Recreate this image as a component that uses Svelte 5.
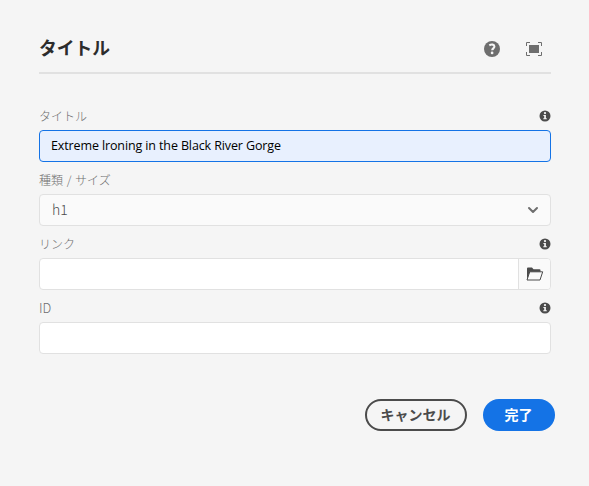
<script>
  let title = $state('Extreme lroning in the Black River Gorge');
  let link = $state('');
  let id = $state('');
</script>

{#snippet info()}
  <svg class="info" width="12" height="12" viewBox="0 0 12 12" aria-hidden="true">
    <circle cx="6" cy="6" r="5.5" fill="#4b4b4b" />
    <circle cx="6" cy="3.1" r="1.15" fill="#f5f5f5" />
    <path d="M4.4 5h2.5v3.3h.9v1H4.3v-1h.9V6h-.8z" fill="#f5f5f5" />
  </svg>
{/snippet}

<main class="dialog">
  <header>
    <h1>タイトル</h1>
    <div class="actions">
      <button class="icon" aria-label="Help">
        <svg width="16" height="16" viewBox="0 0 16 16">
          <circle cx="8" cy="8" r="8" fill="#6e6e6e" />
          <path d="M5.3 4.4C7.5 3 10.4 3.4 10.4 5.6c0 1.7-2.2 1.8-2.2 3.7" fill="none" stroke="#f5f5f5" stroke-width="2.1" />
          <circle cx="8.1" cy="11.9" r="1.35" fill="#f5f5f5" />
        </svg>
      </button>
      <button class="icon" aria-label="Fullscreen">
        <svg width="16" height="14" viewBox="0 0 16 14">
          <path d="M.5 4V.5H4M12 .5h3.5V4M15.5 10v3.5H12M4 13.5H.5V10" fill="none" stroke="#6e6e6e" />
          <rect x="3" y="3" width="10" height="8" fill="#6e6e6e" />
        </svg>
      </button>
    </div>
  </header>

  <form>
    <div class="field">
      <div class="label"><span>タイトル</span>{@render info()}</div>
      <input class="box active" bind:value={title} aria-label="タイトル" />
    </div>
    <div class="field">
      <div class="label"><span class="kind">種類 / サイズ</span></div>
      <button type="button" class="box select">
        <span>h1</span>
        <svg width="12" height="8" viewBox="0 0 12 8">
          <path d="M2 2l4 4 4-4" fill="none" stroke="#6e6e6e" stroke-width="2" stroke-linecap="round" stroke-linejoin="round" />
        </svg>
      </button>
    </div>
    <div class="field">
      <div class="label"><span>リンク</span>{@render info()}</div>
      <div class="box picker">
        <input bind:value={link} aria-label="リンク" />
        <button type="button" aria-label="Open">
          <svg width="18" height="14" viewBox="0 0 18 14">
            <path d="M1 13V1.5Q1 .5 2 .5h4l1.5 1.7h6q1 0 1 1V5" fill="#4b4b4b" />
            <path d="M1 13L3.7 4.8h13L14 13z" fill="#fafafa" stroke="#4b4b4b" stroke-linejoin="round" />
          </svg>
        </button>
      </div>
    </div>
    <div class="field">
      <div class="label"><span class="latin">ID</span>{@render info()}</div>
      <input class="box" bind:value={id} aria-label="ID" />
    </div>
  </form>

  <footer>
    <button class="cancel"><span>キャンセル</span></button>
    <button class="done"><span>完了</span></button>
  </footer>
</main>

<style>
  :global(body) { background: #f5f5f5; }
  .dialog {
    box-sizing: border-box;
    width: 589px;
    height: 486px;
    padding: 24px 38px 0 39px;
    background: #f5f5f5;
    font-family: 'Noto Sans CJK JP', sans-serif;
  }
  button, input { font: inherit; margin: 0; padding: 0; border: 0; background: none; outline: 0; }
  svg { display: block; flex: none; }
  header {
    box-sizing: border-box;
    height: 50px;
    border-bottom: 2px solid #e1e1e1;
    display: flex;
    align-items: center;
    justify-content: space-between;
  }
  h1 { margin: 0; padding-bottom: 2px; font-size: 17.8px; line-height: 24px; font-weight: 700; color: #2c2c2c; }
  .actions { display: flex; gap: 26px; padding: 2px 9px 0 0; align-items: center; }
  form { padding-top: 24px; }
  .field { height: 64px; }
  .label {
    box-sizing: border-box;
    height: 32px;
    padding: 4px 0 0;
    display: flex;
    align-items: center;
    justify-content: space-between;
    font-size: 12px;
    font-weight: 300;
    color: #6e6e6e;
  }
  .label span { padding-bottom: 2px; }
  .label .kind { word-spacing: 1px; }
  .label .latin { font-size: 13px; }
  .box {
    box-sizing: border-box;
    width: 100%;
    height: 32px;
    border: 1px solid #e1e1e1;
    border-radius: 4px;
    background: #fff;
    display: flex;
    align-items: center;
  }
  .active {
    padding: 0 11px 2px;
    background: #e8f0fe;
    border-color: #1473e6;
    font-family: 'Open Sans', sans-serif;
    font-size: 12.5px;
    letter-spacing: -0.12px;
    color: #000;
  }
  .select {
    justify-content: space-between;
    padding: 0 11px 0 12px;
    background: #fafafa;
    color: #4b4b4b;
    font-size: 14px;
    font-weight: 300;
  }
  .select span { padding-bottom: 2px; }
  .picker input { flex: 1; height: 100%; }
  .picker button {
    width: 32px;
    height: 100%;
    display: flex;
    align-items: center;
    justify-content: center;
    border-left: 1px solid #e1e1e1;
    background: #fafafa;
    border-radius: 0 3px 3px 0;
  }
  footer { display: flex; justify-content: flex-end; gap: 16px; margin: 45px -4px 0 0; }
  footer button {
    box-sizing: border-box;
    height: 32px;
    border-radius: 16px;
    font-size: 14px;
    font-weight: 700;
    line-height: 26px;
    padding: 0 1px 2px 0;
  }
  .cancel { width: 102px; border: 2px solid #4b4b4b; color: #4b4b4b; }
  .done { width: 72px; background: #1473e6; color: #fff; }
</style>
